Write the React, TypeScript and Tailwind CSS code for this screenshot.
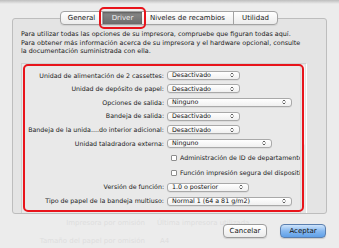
import React from 'react';

const UpDown = () => (
  <svg width="4" height="6" viewBox="0 0 4 6" className="shrink-0">
    <path d="M0.6 2.4 L2 1 L3.4 2.4 M0.6 3.6 L2 5 L3.4 3.6" fill="none" stroke="#3a3a3a" strokeWidth="0.8" />
  </svg>
);

const Popup = ({ label, w }: { label: string; w: string }) => (
  <div className={`h-[9px] ${w} flex items-center justify-between pl-[4px] pr-[5px] rounded-[3px] border border-[#a9a9a9] bg-gradient-to-b from-white to-[#f0f0f0] shadow-[0_0.5px_0_#cfcfcf] text-[#111]`}>
    <span className="leading-none">{label}</span>
    <UpDown />
  </div>
);

const Row = ({ label, h, children }: { label: string; h: string; children: React.ReactNode }) => (
  <div className={`flex items-center ${h}`}>
    <div className="w-[145px] text-right pr-[3px] whitespace-nowrap text-[#1a1a1a]">{label}</div>
    {children}
  </div>
);

const Check = ({ label }: { label: string }) => (
  <div className="flex items-center h-[15px] w-[278px] pl-[149px] whitespace-nowrap overflow-hidden">
    <div className="w-[6px] h-[6px] border border-[#8d8d8d] bg-white rounded-[1px] mr-[3px] shrink-0" />
    <span className="text-[#1a1a1a]">{label}</span>
  </div>
);

export default function App() {
  return (
    <div className="w-[339px] h-[248px] bg-[#ececec] overflow-hidden relative font-['DejaVu_Sans',sans-serif]">
      {/* fondo atenuado */}
      <div className="absolute left-0 right-0 top-[218px] text-[7px] text-[#dedede] leading-none">
        <div className="flex h-[10px] items-center">
          <span className="w-[145px] text-right">Impresora por omisión</span>
          <span className="ml-[12px]">Última impresora utilizada</span>
        </div>
        <div className="flex h-[10px] items-center mt-[8px]">
          <span className="w-[145px] text-right">Tamaño del papel por omisión</span>
          <span className="ml-[15px]">A4</span>
        </div>
      </div>

      <div className="h-[4px] bg-gradient-to-b from-[#bdbdbd] to-[#ececec]" />

      <div className="relative px-[12px] pt-[7px]">
        {/* pestañas */}
        <div className="relative z-10 flex justify-center -mb-[7px] pr-[1px]">
          <div className="flex h-[14px] rounded-[4px] border border-[#a3a3a3] bg-gradient-to-b from-white to-[#ececec] text-[7px] text-[#1a1a1a] shadow-[0_1px_1px_rgba(0,0,0,0.08)]">
            <div className="w-[42px] flex items-center justify-center border-r border-[#a3a3a3]">General</div>
            <div className="relative w-[39px] flex items-center justify-center bg-gradient-to-b from-[#8a8a8a] to-[#6c6c6c] text-[#f2f2f2] shadow-[inset_0_1px_2px_rgba(0,0,0,0.35)]">
              Driver
              <div className="absolute -left-[4px] -right-[4px] -top-[5px] -bottom-[5px] border-2 border-[#e8141b] rounded-[5px]" />
            </div>
            <div className="w-[92px] flex items-center justify-center border-r border-[#a3a3a3]">Niveles de recambios</div>
            <div className="w-[43px] flex items-center justify-center">Utilidad</div>
          </div>
        </div>

        <div className="h-[196px] border border-[#bdbdbd] bg-[#e4e4e4] rounded-[3px] pt-[11px] pl-[8px]">
          <div className="text-[6.4px] leading-[8.5px] text-[#1a1a1a] whitespace-nowrap">
            <p>Para utilizar todas las opciones de su impresora, compruebe que figuran todas aquí.</p>
            <p>Para obtener más información acerca de su impresora y el hardware opcional, consulte</p>
            <p>la documentación suministrada con ella.</p>
          </div>

          {/* lista de opciones */}
          <div className="relative mt-[7px] w-[286px] h-[150px] border-t border-l border-[#d0d0d0] border-r border-r-white bg-[#e9e9e9] text-[6.3px] overflow-hidden">
            <div className="flex flex-col pt-[5px]">
              <Row label="Unidad de alimentación de 2 cassettes:" h="h-[13.6px]"><Popup label="Desactivado" w="w-[73px]" /></Row>
              <Row label="Unidad de depósito de papel:" h="h-[13.6px]"><Popup label="Desactivado" w="w-[73px]" /></Row>
              <Row label="Opciones de salida:" h="h-[13.6px]"><Popup label="Ninguno" w="w-[125px]" /></Row>
              <Row label="Bandeja de salida:" h="h-[13.6px]"><Popup label="Desactivado" w="w-[73px]" /></Row>
              <Row label="Bandeja de la unida....do interior adicional:" h="h-[13.6px]"><Popup label="Desactivado" w="w-[73px]" /></Row>
              <Row label="Unidad taladradora externa:" h="h-[13.6px]"><Popup label="Ninguno" w="w-[105px]" /></Row>
              <Check label="Administración de ID de departamento" />
              <Check label="Función impresión segura del dispositivo" />
              <Row label="Versión de función:" h="h-[14px]"><Popup label="1.0 o posterior" w="w-[82px]" /></Row>
              <Row label="Tipo de papel de la bandeja multiuso:" h="h-[14px]"><Popup label="Normal 1 (64 a 81 g/m2)" w="w-[125px]" /></Row>
            </div>
            {/* barra de desplazamiento */}
            <div className="absolute right-0 top-0 bottom-0 w-[6px] bg-[#e4e4e4] border-l border-[#dadada]">
              <div className="mx-auto mt-[1px] w-[3px] h-[80px] rounded-full bg-[#f4f4f4]" />
            </div>
            <div className="absolute left-[1px] top-[0px] right-[2px] bottom-[1px] border-2 border-[#e8141b] rounded-[5px]" />
          </div>
        </div>
      </div>

      {/* botones */}
      <div className="relative flex justify-end gap-[13px] pr-[13px] mt-[10px] text-[7px]">
        <div className="w-[44px] h-[14px] flex items-center justify-center rounded-[4px] border border-[#9c9c9c] bg-gradient-to-b from-white to-[#ebebeb] text-[#111] shadow-[0_1px_1px_rgba(0,0,0,0.12)]">Cancelar</div>
        <div className="w-[46px] h-[14px] flex items-center justify-center rounded-[4px] border border-[#5b7fae] bg-gradient-to-b from-[#cfe4fb] via-[#86b8ef] to-[#5fa0e8] text-[#111] shadow-[0_1px_1px_rgba(0,0,0,0.15)]">Aceptar</div>
      </div>
    </div>
  );
}
